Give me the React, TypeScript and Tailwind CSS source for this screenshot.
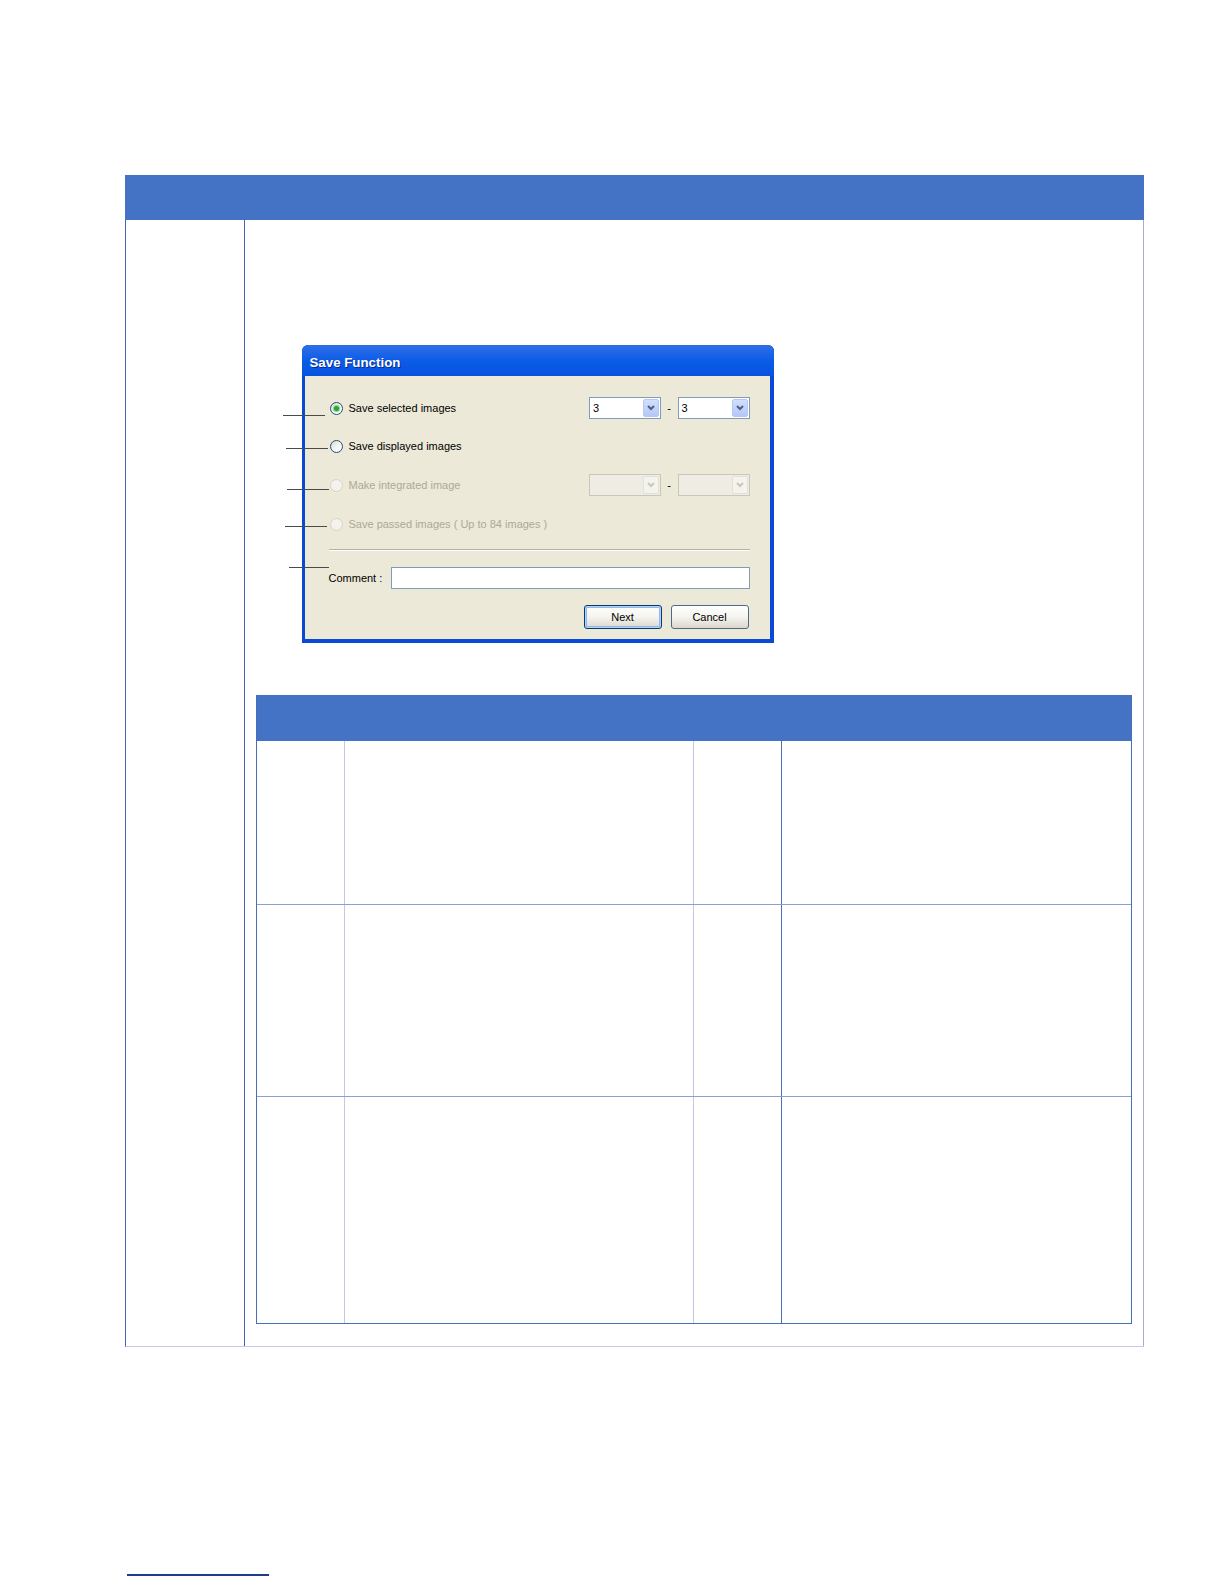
import React from "react";

function Radio({ checked, disabled }: { checked?: boolean; disabled?: boolean }) {
  if (disabled) {
    return (
      <span className="block w-[13px] h-[13px] shrink-0 rounded-full border border-[#D6D4C8] bg-[#F3F2EC]" />
    );
  }
  return (
    <span className="flex w-[13px] h-[13px] shrink-0 items-center justify-center rounded-full border border-[#1C5180] bg-gradient-to-br from-[#DAD9D2] via-[#F3F3EF] to-white">
      {checked ? (
        <span className="block w-[5px] h-[5px] rounded-full bg-[#2BA82B] shadow-[0_0_0_1px_#8ED48E]" />
      ) : null}
    </span>
  );
}

function Chevron({ color }: { color: string }) {
  return (
    <svg width="8" height="6" viewBox="0 0 8 6">
      <path d="M1 1 L4 4 L7 1" fill="none" stroke={color} strokeWidth="2" />
    </svg>
  );
}

function Combo({ value, disabled }: { value?: string; disabled?: boolean }) {
  if (disabled) {
    return (
      <div className="flex w-[72px] h-[22px] border border-[#C9C7BA] bg-[#EFEDE3] p-[1px]">
        <div className="flex-1" />
        <div className="flex w-[16px] items-center justify-center rounded-[2px] bg-[#F4F3EE] border border-[#E3E1D6]">
          <Chevron color="#C9C7BA" />
        </div>
      </div>
    );
  }
  return (
    <div className="flex w-[72px] h-[22px] border border-[#7F9DB9] bg-white p-[1px]">
      <div className="flex-1 pl-[2px] text-[11px] leading-[18px] text-black">{value}</div>
      <div className="flex w-[16px] items-center justify-center rounded-[2px] border border-[#B4C8F5] bg-gradient-to-b from-[#D2DEFC] to-[#B4C8F7]">
        <Chevron color="#4D6185" />
      </div>
    </div>
  );
}

function Dialog() {
  return (
    <div className="relative z-0 ml-[46px] flex w-[472px] h-[298px] flex-col overflow-hidden rounded-t-[6px] bg-[#0A48D6] font-['Liberation_Sans',Arial,sans-serif]">
      <div className="flex h-[31px] shrink-0 items-center pl-[8px] pt-[4px] bg-gradient-to-b from-[#2D6FE6] via-[#0B5CE8] to-[#0752DE]">
        <span className="text-[13.3px] font-bold text-white [text-shadow:1px_1px_0_#0A2A8C]">
          Save Function
        </span>
      </div>
      <div className="flex flex-1 pl-[3px] pr-[4px] pb-[4px]">
        <div className="flex flex-1 flex-col bg-[#ECE9D8] pl-[24px] pr-[20px] pt-[21px] text-[11px] text-black">
          <div className="flex h-[22px] items-center justify-between">
            <div className="ml-[1px] flex items-center gap-[6px]">
              <Radio checked />
              <span>Save selected images</span>
            </div>
            <div className="flex items-center">
              <Combo value="3" />
              <span className="w-[16.6px] text-center">-</span>
              <Combo value="3" />
            </div>
          </div>
          <div className="mt-[16px] flex h-[22px] items-center">
            <div className="ml-[1px] flex items-center gap-[6px]">
              <Radio />
              <span>Save displayed images</span>
            </div>
          </div>
          <div className="mt-[17px] flex h-[22px] items-center justify-between">
            <div className="ml-[1px] flex items-center gap-[6px] text-[#ACA899]">
              <Radio disabled />
              <span>Make integrated image</span>
            </div>
            <div className="flex items-center">
              <Combo disabled />
              <span className="w-[16.6px] text-center">-</span>
              <Combo disabled />
            </div>
          </div>
          <div className="mt-[17px] flex h-[22px] items-center">
            <div className="ml-[1px] flex items-center gap-[6px] text-[#ACA899]">
              <Radio disabled />
              <span>Save passed images ( Up to 84 images )</span>
            </div>
          </div>
          <div className="mt-[14px] h-px bg-[#B5B2A4] shadow-[0_1px_0_#FFFFFF]" />
          <div className="mt-[17px] flex h-[22px] items-center">
            <span className="w-[62px] shrink-0">Comment :</span>
            <div className="h-[22px] flex-1 border border-[#7F9DB9] bg-white" />
          </div>
          <div className="mt-[16px] flex justify-end gap-[9px] pr-[1px]">
            <div className="flex w-[78px] h-[24px] items-center justify-center rounded-[3px] border border-[#003C74] bg-gradient-to-b from-white via-[#F5F4EF] to-[#DCD7CB] shadow-[inset_0_0_0_1px_#B8D2F6,inset_0_0_0_2px_#93B6EC]">
              Next
            </div>
            <div className="flex w-[78px] h-[24px] items-center justify-center rounded-[3px] border border-[#4D6A8C] bg-gradient-to-b from-white via-[#F5F4EF] to-[#DCD7CB]">
              Cancel
            </div>
          </div>
        </div>
      </div>
    </div>
  );
}

function InnerTable() {
  const rows = ["h-[164px] border-b border-b-[#8A9FD2]", "h-[192px] border-b border-b-[#8A9FD2]", "h-[225.5px]"];
  return (
    <div className="mt-[52px] flex flex-col border-x-[1.5px] border-b-[1.5px] border-[#4A6DB8]">
      <div className="h-[46px] bg-[#4472C4]" />
      {rows.map((r, i) => (
        <div key={i} className={"flex " + r}>
          <div className="w-[88px] shrink-0 border-r border-r-[#C3C6E6]" />
          <div className="w-[349px] shrink-0 border-r border-r-[#C3C6E6]" />
          <div className="w-[88px] shrink-0 border-r-[1.5px] border-r-[#4A6DB8]" />
          <div className="flex-1" />
        </div>
      ))}
    </div>
  );
}

export default function App() {
  return (
    <div className="relative w-[1224px] h-[1584px] bg-white">
      <div className="pt-[175px] pl-[124.5px]">
        <div className="w-[1019px]">
          <div className="h-[45px] bg-[#4472C4]" />
          <div className="flex h-[1127px] border-l-[1.5px] border-l-[#4565B0] border-b-[1.5px] border-b-[#C5C9EA]">
            <div className="w-[119px] shrink-0 border-r-[1.5px] border-r-[#4565B0]" />
            <div className="relative flex-1 border-r-[1.5px] border-r-[#A4ABD6] pt-[125px] pl-[11px] pr-[10.5px]">
              <div className="absolute z-10 left-[38px] top-[195px] w-[42px] h-px bg-[#4A4A4A]" />
              <div className="absolute z-10 left-[41px] top-[228px] w-[42px] h-px bg-[#4A4A4A]" />
              <div className="absolute z-10 left-[42px] top-[269px] w-[42px] h-px bg-[#4A4A4A]" />
              <div className="absolute z-10 left-[40px] top-[306px] w-[42px] h-px bg-[#4A4A4A]" />
              <div className="absolute z-10 left-[44px] top-[347px] w-[40px] h-px bg-[#4A4A4A]" />
              <Dialog />
              <InnerTable />
            </div>
          </div>
        </div>
        <div className="mt-[227px] ml-[2.5px] w-[142px] h-[1.5px] bg-[#1F3A8F]" />
      </div>
    </div>
  );
}
